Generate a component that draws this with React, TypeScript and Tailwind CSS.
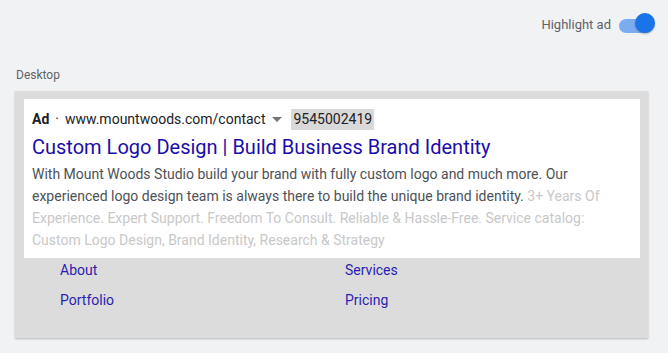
import React from "react";

const sitelinks = ["About", "Services", "Portfolio", "Pricing"];

export default function App() {
  return (
    <div className="min-h-screen w-full bg-[#f1f2f4] font-['Roboto',sans-serif] pt-[13px]">
      {/* Highlight toggle */}
      <div className="flex items-center justify-end pr-[13px] h-[22px]">
        <span className="text-[13px] text-[#5f6368] mr-[8px] mt-[2px]">Highlight ad</span>
        <div className="relative w-[36px] h-[22px] flex items-center">
          <div className="w-[34px] h-[14px] mt-[3px] rounded-full bg-[#7cacf0]" />
          <div className="absolute right-0 top-0 w-[20px] h-[20px] rounded-full bg-[#1a73e8] shadow-[0_1px_2px_rgba(0,0,0,0.3)]" />
        </div>
      </div>

      <div className="pl-[16px] mt-[32px] text-[12px] leading-[16px] text-[#5f6368]">Desktop</div>

      {/* Ad preview card */}
      <div className="ml-[15px] mr-[20px] mt-[8px] bg-[#dcdcdc] pt-[8px] pl-[9px] pr-[8px] pb-[26px] shadow-[0_1px_2px_rgba(0,0,0,0.25)]">
        <div className="bg-white px-[8px] pt-[10px] pb-[7px]">
          <div className="flex items-center h-[21px] text-[14px] text-[#202124]">
            <span className="font-bold">Ad</span>
            <span className="mx-[6px]">·</span>
            <span>www.mountwoods.com/contact</span>
            <svg width="10" height="6" viewBox="0 0 10 6" className="ml-[7px] mr-[9px]">
              <path d="M0 0 L10 0 L5 5 Z" fill="#70757a" />
            </svg>
            <span className="bg-[#d9d9d9] px-[2px] h-[21px] leading-[21px]">9545002419</span>
          </div>
          <div className="text-[20px] leading-[26px] text-[#1a0dab] mt-[4px]">
            Custom Logo Design | Build Business Brand Identity
          </div>
          <p className="text-[14px] leading-[22px] text-[#4d5156] mt-[3px]">
            With Mount Woods Studio build your brand with fully custom logo and much more. Our experienced logo design team is always there to build the unique brand identity.{" "}
            <span className="text-[#c8c8c8]">
              3+ Years Of Experience. Expert Support. Freedom To Consult. Reliable &amp; Hassle-Free. Service catalog: Custom Logo Design, Brand Identity, Research &amp; Strategy
            </span>
          </p>
        </div>
        <div className="grid grid-cols-[285px_1fr] pl-[36px] gap-y-[6px]">
          {sitelinks.map((s) => (
            <span key={s} className="text-[14px] leading-[24px] text-[#2a1fb0]">
              {s}
            </span>
          ))}
        </div>
      </div>
    </div>
  );
}
